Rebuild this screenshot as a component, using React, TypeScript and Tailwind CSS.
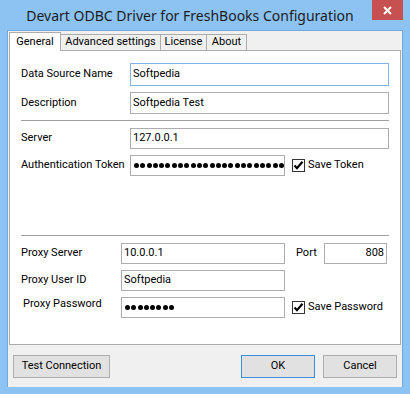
import { ReactNode } from "react";

const Field = ({ children, focus, className }: { children?: ReactNode; focus?: boolean; className: string }) => (
  <div
    className={`h-full bg-white border ${focus ? "border-[#7eb4ea]" : "border-[#abadb3]"} flex items-center px-[2px] overflow-hidden ${className}`}
  >
    {children}
  </div>
);

const Dots = ({ n }: { n: number }) => (
  <div className="flex gap-[1.3px] pl-[1px] whitespace-nowrap">
    {Array.from({ length: n }).map((_, i) => (
      <span key={i} className="w-[5px] h-[5px] rounded-full bg-black shrink-0" />
    ))}
  </div>
);

const Check = ({ label }: { label: string }) => (
  <div className="flex items-center ml-[7px]">
    <span className="w-[13px] h-[13px] border border-[#333] bg-white flex items-center justify-center">
      <svg width="11" height="11" viewBox="0 0 11 11">
        <path d="M1.5 5.5 L4 8.2 L9.5 1.8" fill="none" stroke="#000" strokeWidth="2.2" />
      </svg>
    </span>
    <span className="ml-[3px]">{label}</span>
  </div>
);

const Btn = ({ children, primary, className }: { children: ReactNode; primary?: boolean; className: string }) => (
  <div
    className={`h-[23px] flex items-center justify-center bg-[#e1e1e1] border ${primary ? "border-[#3c8fe0]" : "border-[#adadad]"} ${className}`}
  >
    {children}
  </div>
);

export default function App() {
  return (
    <div className="w-[410px] h-[394px] bg-[#8cc3f3] flex flex-col font-['Roboto',sans-serif] text-[11px] text-black whitespace-nowrap">
      {/* title bar */}
      <div className="h-[30px] relative flex items-center justify-center shrink-0">
        <span className="text-[14px] text-[#1b1b1b] -ml-[30px] mt-[1px] font-['Noto_Sans',sans-serif]">
          Devart ODBC Driver for FreshBooks Configuration
        </span>
        <div className="absolute right-[7px] top-0 w-[31px] h-[20px] bg-[#c75050] flex items-center justify-center">
          <svg width="9" height="9" viewBox="0 0 9 9">
            <path d="M1 1 L8 8 M8 1 L1 8" stroke="#fff" strokeWidth="2" />
          </svg>
        </div>
      </div>

      {/* client */}
      <div className="mx-[7px] h-[357px] border-x border-t border-[#73a8dc] bg-[#f0f0f0] flex flex-col">
        <div className="flex items-end h-[19px] ml-[1px] mt-[1px] relative z-10">
          <div className="w-[52px] h-[19px] bg-white border border-b-0 border-[#acacac] flex items-start justify-center pt-[1px]">
            General
          </div>
          <div className="w-[100px] h-[16px] mb-[1px] bg-[#f0f0f0] border border-b-0 border-l-0 border-[#acacac] flex items-center justify-center">
            Advanced settings
          </div>
          <div className="w-[46px] h-[16px] mb-[1px] bg-[#f0f0f0] border border-b-0 border-l-0 border-[#acacac] flex items-center justify-center">
            License
          </div>
          <div className="w-[40px] h-[16px] mb-[1px] bg-[#f0f0f0] border border-b-0 border-l-0 border-[#acacac] flex items-center justify-center">
            About
          </div>
        </div>

        {/* panel */}
        <div className="-mt-[1px] mx-[1px] h-[295px] bg-white border border-[#acacac] flex flex-col px-[11px] pt-[12px]">
          <div className="flex items-center h-[23px]">
            <span className="w-[109px]">Data Source Name</span>
            <Field focus className="flex-1">Softpedia</Field>
          </div>
          <div className="flex items-center h-[22px] mt-[6px]">
            <span className="w-[109px]">Description</span>
            <Field className="flex-1">Softpedia Test</Field>
          </div>
          <div className="h-[1px] bg-[#a0a0a0] mt-[6px]" />
          <div className="flex items-center h-[21px] mt-[7px]">
            <span className="w-[109px]">Server</span>
            <Field className="flex-1">127.0.0.1</Field>
          </div>
          <div className="flex items-center h-[21px] mt-[6px]">
            <span className="w-[109px]">Authentication Token</span>
            <Field className="w-[155px]">
              <Dots n={24} />
            </Field>
            <Check label="Save Token" />
          </div>

          <div className="h-[1px] bg-[#a0a0a0] mt-[59px]" />

          <div className="flex items-center h-[21px] mt-[7px]">
            <span className="w-[100px]">Proxy Server</span>
            <Field className="w-[164px]">10.0.0.1</Field>
            <span className="ml-[11px] w-[28px]">Port</span>
            <Field className="w-[63px] justify-end">808</Field>
          </div>
          <div className="flex items-center h-[21px] mt-[6px]">
            <span className="w-[100px]">Proxy User ID</span>
            <Field className="w-[164px]">Softpedia</Field>
          </div>
          <div className="flex items-center h-[21px] mt-[6px]">
            <span className="w-[100px] pl-[2px] mb-[6px]">Proxy Password</span>
            <Field className="w-[164px]">
              <Dots n={8} />
            </Field>
            <Check label="Save Password" />
          </div>
        </div>

        {/* buttons */}
        <div className="flex mt-[10px] px-[5px]">
          <Btn className="w-[97px]">Test Connection</Btn>
          <Btn primary className="w-[74px] ml-auto">OK</Btn>
          <Btn className="w-[74px] ml-[8px]">Cancel</Btn>
        </div>
      </div>
      <div className="flex-1" />
    </div>
  );
}
